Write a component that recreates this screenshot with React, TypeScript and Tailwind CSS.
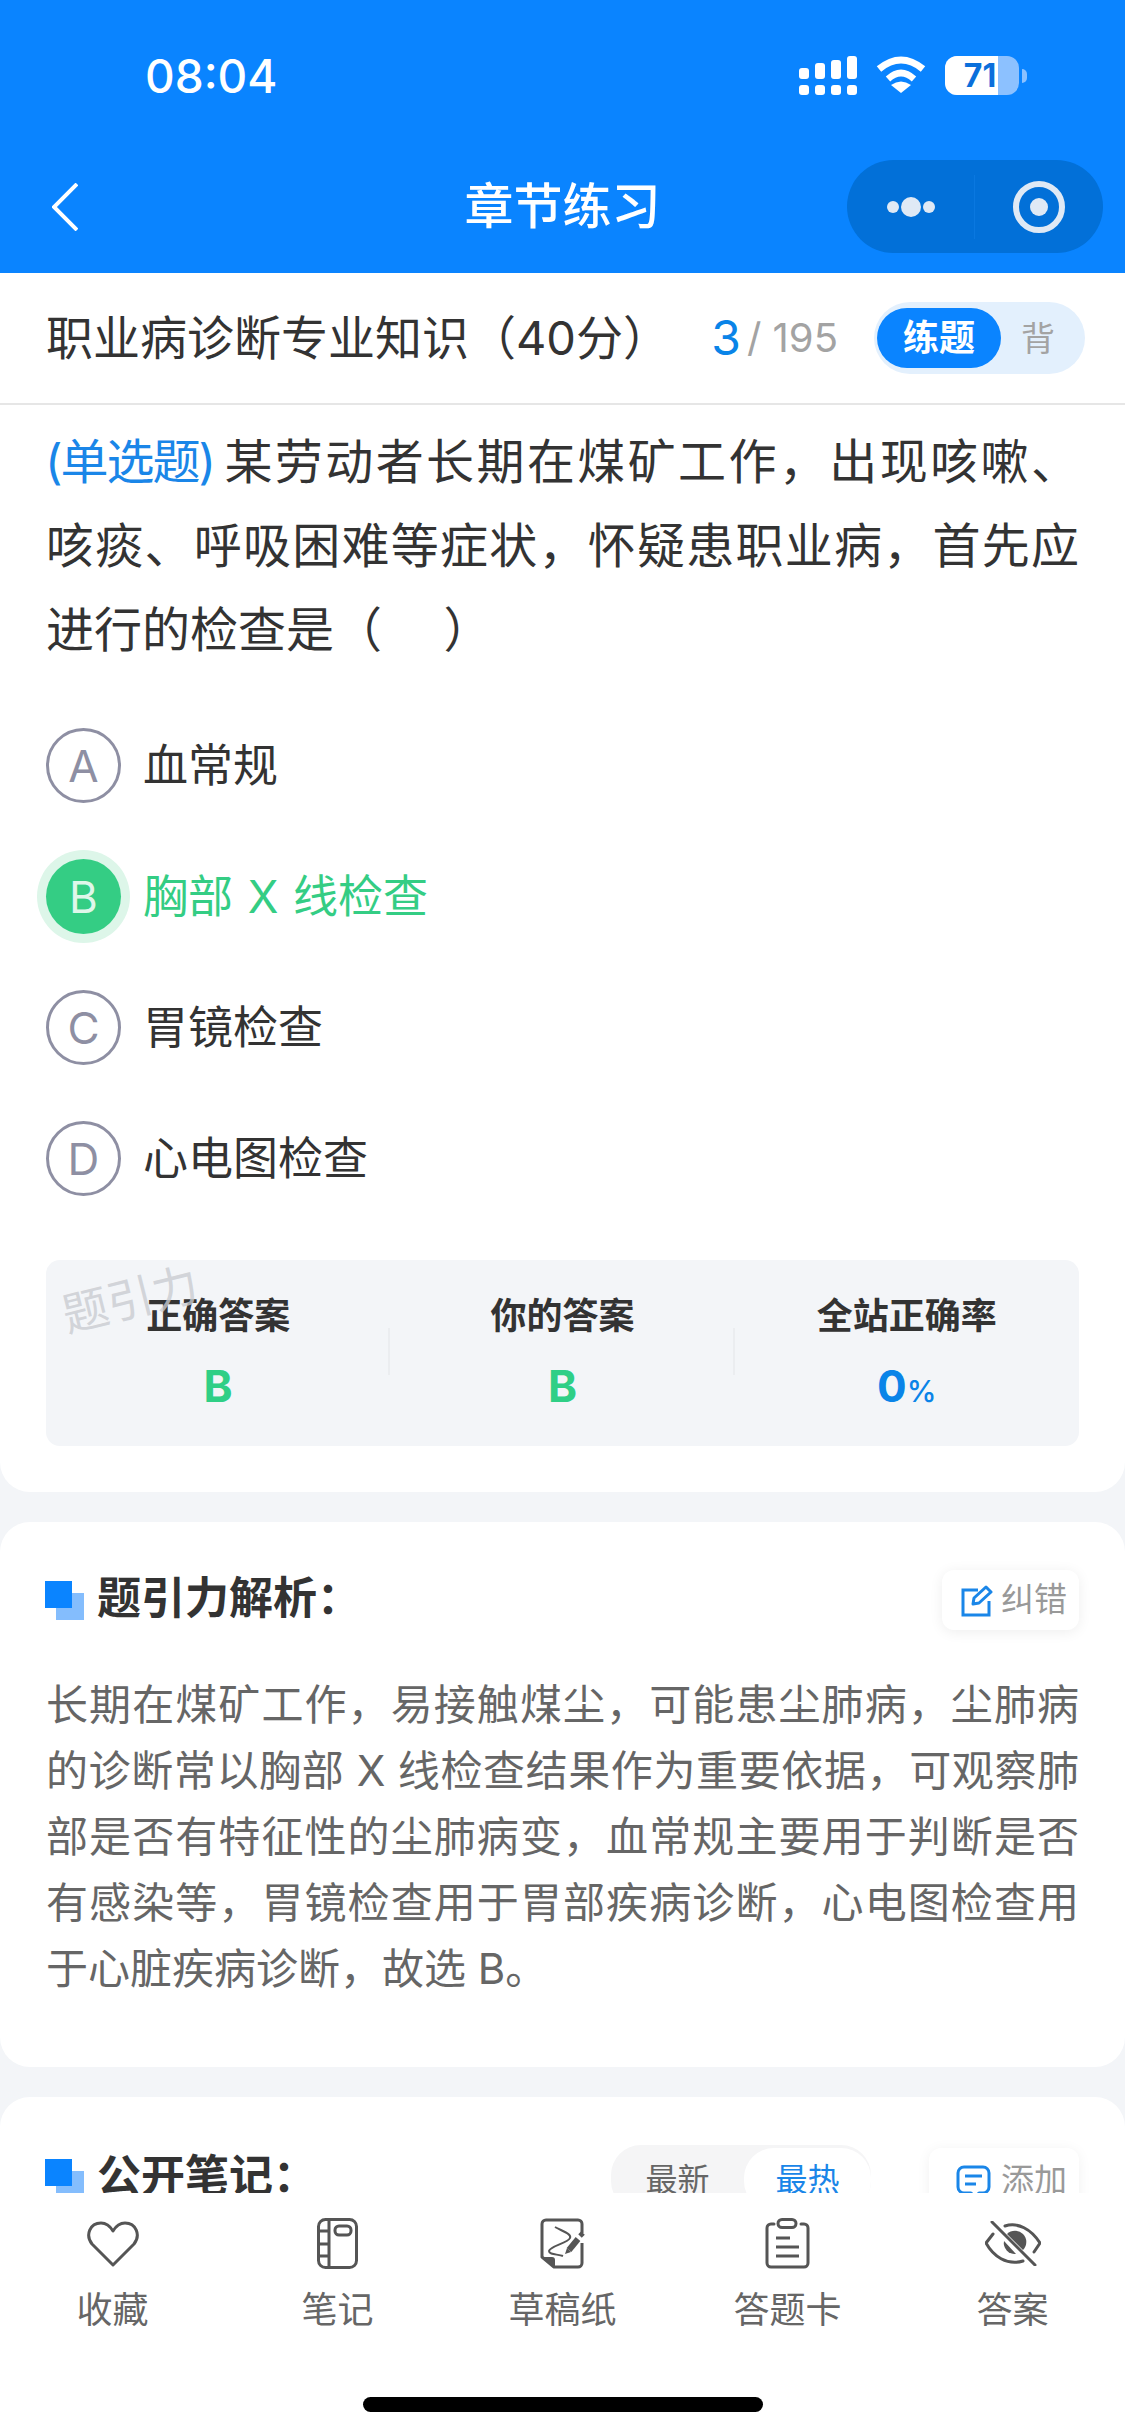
const optionList = [
  { key: "A", text: "血常规" },
  { key: "B", text: "胸部 X 线检查", correct: true },
  { key: "C", text: "胃镜检查" },
  { key: "D", text: "心电图检查" },
];

function SignalIcon() {
  return (
    <svg width="58" height="39" viewBox="0 0 58 39" fill="#fff">
      <rect x="0" y="12" width="10" height="11" rx="3" />
      <rect x="16" y="7" width="10" height="16" rx="3" />
      <rect x="32" y="4" width="10" height="19" rx="3" />
      <rect x="48" y="0" width="10" height="23" rx="3" />
      <rect x="0" y="29" width="10" height="10" rx="3" />
      <rect x="16" y="29" width="10" height="10" rx="3" />
      <rect x="32" y="29" width="10" height="10" rx="3" />
      <rect x="48" y="29" width="10" height="10" rx="3" />
    </svg>
  );
}

function WifiIcon() {
  return (
    <svg width="50" height="37" viewBox="0 0 50 37" fill="none" stroke="#fff">
      <path d="M3 13 Q25 -5 47 13" strokeWidth="7" />
      <path d="M12 23 Q25 11 38 23" strokeWidth="6.5" />
      <path d="M15 29 Q25 22 35 29 L25 37 Z" fill="#fff" stroke="none" />
    </svg>
  );
}

function Battery() {
  return (
    <div className="flex items-center">
      <div className="relative w-[74px] h-[39px] rounded-[12px] bg-[#8cc1ff] overflow-hidden">
        <div className="w-[53px] h-full bg-white" />
        <span className="absolute inset-0 flex items-center justify-center pr-[4px] text-[32px] leading-none font-bold text-[#0a6fdb]">
          71
        </span>
      </div>
      <div className="ml-[3px] w-[5px] h-[14px] rounded-r-full bg-[#8cc1ff]" />
    </div>
  );
}

function StackedSquares() {
  return (
    <div className="relative w-[39px] h-[39px] shrink-0 -ml-[1px]">
      <div className="absolute right-0 bottom-0 w-[28px] h-[27px] bg-[#84bdfd]" />
      <div className="absolute left-0 top-0 w-[27px] h-[27px] bg-[#0a84ff]" />
    </div>
  );
}

function EditIcon() {
  return (
    <svg width="32" height="33" viewBox="0 0 32 33" fill="none" stroke="#1a86e8" strokeWidth="3">
      <path d="M17 6 H2 V31 H28 V17" />
      <path d="M12 20 L13 14 L25 3 L30 8 L18 19 Z" strokeLinejoin="round" />
    </svg>
  );
}

function ChatIcon() {
  return (
    <svg width="35" height="33" viewBox="0 0 35 33" fill="none" stroke="#1a86e8" strokeWidth="3">
      <path d="M8 2 H27 a6 6 0 0 1 6 6 V22 a6 6 0 0 1-6 6 H23 L19 32 L15 28 H8 a6 6 0 0 1-6-6 V8 a6 6 0 0 1 6-6 Z" strokeLinejoin="round" />
      <path d="M9 11 H26 M9 19 H20" />
    </svg>
  );
}

function HeartIcon() {
  return (
    <svg width="52" height="46" viewBox="0 0 52 46" fill="none" stroke="#555" strokeWidth="3" strokeLinejoin="round">
      <path d="M26 44 L5 23 C-2 14 3 2 14 2 C19 2 23 5 26 10 C29 5 33 2 38 2 C49 2 54 14 47 23 Z" />
    </svg>
  );
}

function NotebookIcon() {
  return (
    <svg width="41" height="51" viewBox="0 0 41 51" fill="none" stroke="#555" strokeWidth="3">
      <rect x="1.5" y="1.5" width="38" height="48" rx="7" />
      <path d="M12 2 V49 M2 13 H12 M2 26 H12 M2 38 H12" />
      <rect x="18" y="8" width="16" height="9" rx="4" />
    </svg>
  );
}

function DraftIcon() {
  return (
    <svg width="45" height="51" viewBox="0 0 45 51" fill="none" stroke="#555" strokeWidth="3">
      <path d="M42 15 V6 a4 4 0 0 0-4-4 H6 a4 4 0 0 0-4 4 V39 L14 49 H38 a4 4 0 0 0 4-4 V25" strokeLinejoin="round" />
      <path d="M2 39 H12 a3 3 0 0 1 3 3 V50 Z" fill="#555" stroke="none" />
      <path d="M15 9 C22 13 32 16 30 20 C28 25 10 28 9 33 C9 37 18 36 23 38" strokeWidth="2" />
      <path d="M29 32 L38 21" strokeWidth="6" />
      <path d="M25 36 L27 30 L31 34 Z" fill="#555" stroke="none" />
      <path d="M40 18 L43 15" strokeWidth="5" />
    </svg>
  );
}

function ClipboardIcon() {
  return (
    <svg width="45" height="51" viewBox="0 0 45 51" fill="none" stroke="#555" strokeWidth="3">
      <path d="M9 6 H6 a4 4 0 0 0-4 4 V45 a4 4 0 0 0 4 4 H39 a4 4 0 0 0 4-4 V10 a4 4 0 0 0-4-4 H36" strokeLinecap="round" />
      <rect x="13" y="1.5" width="18" height="8" rx="4" />
      <path d="M11 20 H25 M11 29 H34 M11 38 H34" />
    </svg>
  );
}

function EyeOffIcon() {
  return (
    <svg width="56" height="45" viewBox="0 0 56 45" fill="none" stroke="#555" strokeWidth="3" strokeLinecap="round">
      <path d="M20 5 C33 1 46 8 55 22 L49 31" />
      <path d="M8 13 L1 22 C8 35 22 45 38 40" />
      <path d="M7 1 L50 44" />
      <path d="M22 13 A11 11 0 0 1 38 29 Z" fill="#555" stroke="none" />
      <path d="M19 20 L31 33 A11 11 0 0 1 19 20 Z" fill="#555" stroke="none" />
    </svg>
  );
}

const tabList = [
  { label: "收藏", icon: <HeartIcon /> },
  { label: "笔记", icon: <NotebookIcon /> },
  { label: "草稿纸", icon: <DraftIcon /> },
  { label: "答题卡", icon: <ClipboardIcon /> },
  { label: "答案", icon: <EyeOffIcon /> },
];

export default function App() {
  return (
    <div
      lang="zh-CN"
      className="w-[1125px] h-[2436px] flex flex-col overflow-hidden bg-[#f3f5f8] font-['Inter','Noto_Sans_CJK_SC',sans-serif]"
    >
      {/* status bar + nav */}
      <div className="h-[273px] shrink-0 bg-[#0a84ff] text-white">
        <div className="h-[160px] flex items-start justify-between pt-[56px] pl-[145px] pr-[98px]">
          <span className="text-[46px] leading-[40px] font-medium">08:04</span>
          <div className="flex items-start gap-[19px]">
            <SignalIcon />
            <WifiIcon />
            <Battery />
          </div>
        </div>
        <div className="grid grid-cols-[1fr_auto_1fr] items-start px-[22px]">
          <svg className="mt-[23px] ml-[30px]" width="26" height="48" viewBox="0 0 26 48" fill="none" stroke="#fff" strokeWidth="4">
            <path d="M25 1 L2 24 L25 47" />
          </svg>
          <div className="h-[93px] flex items-center text-[49px] font-medium">章节练习</div>
          <div className="justify-self-end w-[256px] h-[93px] flex items-center rounded-full bg-[#0270d8]">
            <div className="w-[128px] h-[64px] flex items-center justify-center gap-[2px] border-r border-[#0a78e0]">
              <span className="w-[12px] h-[12px] rounded-full bg-[#dfe9f5]" />
              <span className="w-[20px] h-[20px] rounded-full bg-[#dfe9f5]" />
              <span className="w-[12px] h-[12px] rounded-full bg-[#dfe9f5]" />
            </div>
            <div className="flex-1 flex items-center justify-center">
              <div className="w-[52px] h-[52px] rounded-full border-[6px] border-[#dfe9f5] flex items-center justify-center">
                <span className="w-[18px] h-[18px] rounded-full bg-[#dfe9f5]" />
              </div>
            </div>
          </div>
        </div>
      </div>

      {/* chapter title row */}
      <div className="h-[132px] shrink-0 bg-white border-b-2 border-[#e6e6e6] flex items-center justify-between pl-[46px] pr-[40px]">
        <span className="text-[47px] leading-[60px] text-[#333]">职业病诊断专业知识（40分）</span>
        <div className="flex items-center">
          <span className="text-[48px] leading-none text-[#0a84e8]">3</span>
          <span className="ml-[6px] text-[40px] leading-none text-[#a3a3a3]">/ 195</span>
          <div className="ml-[36px] w-[211px] h-[72px] flex items-center rounded-full bg-[#e3f0fd] pl-[3px]">
            <div className="w-[124px] h-[60px] flex items-center justify-center rounded-full bg-[#0a84ff] text-[36px] font-semibold text-white">
              练题
            </div>
            <span className="ml-[20px] text-[34px] text-[#a3a3a3]">背</span>
          </div>
        </div>
      </div>

      <div className="flex-1 overflow-hidden flex flex-col gap-[30px]">
        {/* question */}
        <div className="shrink-0 bg-white rounded-b-[30px] px-[46px] pt-[15px] pb-[46px]">
          <p className="text-[48px] leading-[84px] text-[#333] text-justify">
            <span className="inline-block mr-[8px] -ml-[1px] text-[#1a86e8] tracking-[-2px]">(单选题)</span>某劳动者长期在煤矿工作，出现咳嗽、咳痰、呼吸困难等症状，怀疑患职业病，首先应进行的检查是（　&nbsp;）
          </p>
          <div className="mt-[28px] flex flex-col">
            {optionList.map((opt) => (
              <div key={opt.key} className="h-[131px] flex items-center gap-[22px]">
                {opt.correct ? (
                  <div className="w-[75px] h-[75px] rounded-full bg-[#34cd84] shadow-[0_0_0_9px_#ddf6e9] flex items-center justify-center text-[44px] text-[#dff7ea]">
                    {opt.key}
                  </div>
                ) : (
                  <div className="w-[75px] h-[75px] rounded-full border-[3px] border-[#8e8fa3] flex items-center justify-center text-[44px] text-[#8e8fa3]">
                    {opt.key}
                  </div>
                )}
                <span className={opt.correct ? "text-[45px] text-[#34cd84] [word-spacing:2px]" : "text-[45px] text-[#333]"}>{opt.text}</span>
              </div>
            ))}
          </div>
          <div className="relative mt-[36px] h-[186px] rounded-[14px] bg-[#f3f5f8] grid grid-cols-3 text-center">
            <div className="relative pt-[36px]">
              <div className="text-[36px] leading-[40px] font-semibold text-[#333]">正确答案</div>
              <div className="mt-[25px] text-[44px] leading-[50px] font-bold text-[#2fcf86]">B</div>
              <div className="absolute right-0 top-[68px] w-[2px] h-[47px] bg-[#ebedf0]" />
            </div>
            <div className="relative pt-[36px]">
              <div className="text-[36px] leading-[40px] font-semibold text-[#333]">你的答案</div>
              <div className="mt-[25px] text-[44px] leading-[50px] font-bold text-[#2fcf86]">B</div>
              <div className="absolute right-0 top-[68px] w-[2px] h-[47px] bg-[#ebedf0]" />
            </div>
            <div className="pt-[36px]">
              <div className="text-[36px] leading-[40px] font-semibold text-[#333]">全站正确率</div>
              <div className="mt-[25px] leading-[50px] font-bold text-[#0a84e8]">
                <span className="text-[44px]">0</span>
                <span className="text-[30px] font-medium">%</span>
              </div>
            </div>
            <span className="absolute left-[15px] top-[16px] -rotate-[14deg] text-[46px] leading-none text-[#c9ccd1]/80">
              题引力
            </span>
          </div>
        </div>

        {/* analysis */}
        <div className="shrink-0 bg-white rounded-[30px] px-[46px] pt-[48px] pb-[65px]">
          <div className="flex items-center justify-between h-[60px]">
            <div className="flex items-center gap-[13px]">
              <StackedSquares />
              <span className="pb-[4px] text-[44px] leading-[56px] font-bold text-[#333]">题引力解析：</span>
            </div>
            <div className="w-[137px] h-[60px] flex items-center justify-end gap-[8px] pr-[12px] rounded-[12px] bg-white shadow-[0_2px_14px_rgba(0,0,0,0.07)] text-[33px] text-[#999]">
              <EditIcon />
              纠错
            </div>
          </div>
          <p className="mt-[42px] text-[42px] leading-[66px] text-[#666] text-justify">
            长期在煤矿工作，易接触煤尘，可能患尘肺病，尘肺病的诊断常以胸部 X 线检查结果作为重要依据，可观察肺部是否有特征性的尘肺病变，血常规主要用于判断是否有感染等，胃镜检查用于胃部疾病诊断，心电图检查用于心脏疾病诊断，故选 B。
          </p>
        </div>

        {/* public notes, cut off by the tab bar */}
        <div className="shrink-0 bg-white rounded-t-[30px] px-[46px] pt-[48px] h-[300px]">
          <div className="flex items-start justify-between">
            <div className="flex items-center gap-[13px] h-[66px]">
              <StackedSquares />
              <span className="pb-[4px] text-[44px] leading-[56px] font-bold text-[#333]">公开笔记：</span>
            </div>
            <div className="flex items-start gap-[58px]">
              <div className="w-[260px] h-[66px] flex rounded-[30px] bg-[#f5f5f6] text-[32px] pt-[3px]">
                <div className="w-[133px] flex items-center justify-center text-[#666]">最新</div>
                <div className="w-[127px] flex items-center justify-center rounded-[30px] bg-white text-[#1a86e8]">最热</div>
              </div>
              <div className="w-[150px] h-[66px] flex items-center justify-end gap-[10px] pr-[12px] mt-[3px] rounded-[12px] bg-white shadow-[0_2px_14px_rgba(0,0,0,0.06)] text-[33px] text-[#999]">
                <ChatIcon />
                添加
              </div>
            </div>
          </div>
        </div>
      </div>

      {/* bottom tabs */}
      <div className="h-[243px] shrink-0 bg-white flex flex-col items-center">
        <div className="w-full grid grid-cols-5 pt-[25px]">
          {tabList.map((tab) => (
            <div key={tab.label} className="flex flex-col items-center">
              <div className="h-[51px] flex items-center justify-center">{tab.icon}</div>
              <span className="mt-[18px] text-[36px] leading-[46px] text-[#666]">{tab.label}</span>
            </div>
          ))}
        </div>
        <div className="mt-[64px] w-[400px] h-[15px] rounded-full bg-black" />
      </div>
    </div>
  );
}
